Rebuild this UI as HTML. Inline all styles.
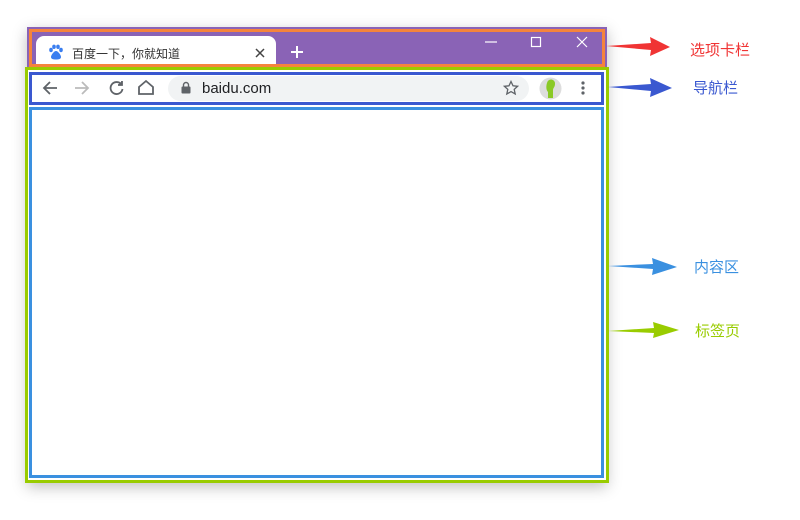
<!DOCTYPE html>
<html><head><meta charset="utf-8"><style>
*{margin:0;padding:0;box-sizing:border-box}
body{width:800px;height:520px;background:#fff;position:relative;overflow:hidden;font-family:"Liberation Sans","Noto Sans CJK SC",sans-serif}
.abs{position:absolute}
.win{left:27px;top:27px;width:580px;height:456px;background:#8a63b6;box-shadow:0 4px 14px rgba(0,0,0,.25)}
.tabbar{left:29px;top:29px;width:576px;height:38px;border:3px solid #f5843c}
.tab{left:36px;top:36px;width:240px;height:32px;background:#fff;border-radius:8px 8px 0 0}
.green{left:25px;top:67px;width:584px;height:416px;border:3px solid #99cc00;background:#fff}
.nav{left:29px;top:72px;width:575px;height:33px;border:3px solid #3a58d0;background:#fff}
.omni{left:168px;top:76px;width:361px;height:25px;background:#f1f3f4;border-radius:13px}
.content{left:29px;top:107px;width:575px;height:371px;border:3px solid #3a90e0;background:#fff}
.lbl{font-size:15px}
</style></head><body>
<div class="abs win"></div>
<div class="abs tab"></div>
<div class="abs tabbar"></div>
<svg class="abs" style="left:48px;top:44px" width="16" height="16" viewBox="0 0 16 16" fill="#3a7ef0"><ellipse cx="3" cy="6" rx="1.8" ry="2.2"/><ellipse cx="6" cy="2.8" rx="1.8" ry="2.2"/><ellipse cx="10" cy="2.8" rx="1.8" ry="2.2"/><ellipse cx="13" cy="6" rx="1.8" ry="2.2"/><path d="M8 7c-2 0-5 4-5 6s2 2.5 5 2.5 5-.5 5-2.5-3-6-5-6z"/></svg>
<div class="abs" style="left:72px;top:45px;font-size:12px;color:#333">百度一下，你就知道</div>
<svg class="abs" style="left:254px;top:47px" width="12" height="12" viewBox="0 0 12 12" stroke="#444" stroke-width="1.5"><path d="M2 2l8 8M10 2l-8 8"/></svg>
<svg class="abs" style="left:290px;top:45px" width="14" height="14" viewBox="0 0 14 14" stroke="#fff" stroke-width="2"><path d="M7 1v12M1 7h12"/></svg>
<svg class="abs" style="left:484px;top:36px" width="110" height="14" viewBox="0 0 110 14" stroke="#fff" stroke-width="1.2" fill="none"><path d="M1 6h12"/><rect x="47.5" y="1.5" width="9" height="9"/><path d="M93 1l10 10M103 1l-10 10"/></svg>
<div class="abs green"></div>
<div class="abs nav"></div>
<div class="abs omni"></div>
<svg class="abs" style="left:40px;top:78px" width="140" height="20" viewBox="0 0 140 20" fill="none" stroke-width="1.8">
<path d="M17 10H4M10 4l-6 6 6 6" stroke="#5f6368"/>
<path d="M35 10h13M42 4l6 6-6 6" stroke="#bbb"/>
<path d="M81 6a6 6 0 1 0 1.5 5" stroke="#5f6368"/><path d="M82 3v4h-4" stroke="#5f6368" fill="#5f6368"/>
<path d="M99 16V9l7-6 7 6v7z" stroke="#5f6368"/>
</svg>
<svg class="abs" style="left:180px;top:81px" width="12" height="13" viewBox="0 0 12 13" fill="#5f6368"><rect x="1.5" y="5.5" width="9" height="7" rx="1"/><path d="M3.5 6V4a2.5 2.5 0 0 1 5 0v2" fill="none" stroke="#5f6368" stroke-width="1.4"/></svg>
<div class="abs" style="left:202px;top:80px;font-size:15px;color:#202124">baidu.com</div>
<svg class="abs" style="left:503px;top:80px" width="16" height="16" viewBox="0 0 16 16" fill="none" stroke="#5f6368" stroke-width="1.3"><path d="M8 1.5l2 4.3 4.6.5-3.4 3.1 1 4.6L8 11.6 3.8 14l1-4.6L1.4 6.3 6 5.8z"/></svg>
<svg class="abs" style="left:539px;top:77px" width="23" height="23" viewBox="0 0 23 23"><circle cx="11.5" cy="11.5" r="11" fill="#ddd"/><path d="M8 6a4 4 0 0 1 8 1c0 3-2 4-2 6v8h-5v-6c-2-2-2-6-1-9z" fill="#8ac926"/></svg>
<svg class="abs" style="left:580px;top:80px" width="6" height="16" viewBox="0 0 6 16" fill="#5f6368"><circle cx="3" cy="3" r="1.6"/><circle cx="3" cy="8" r="1.6"/><circle cx="3" cy="13" r="1.6"/></svg>
<div class="abs content"></div>
<svg class="abs" style="left:600px;top:30px" width="90" height="320" viewBox="0 0 90 320">
<path d="M6 16l45-3-1-6 20 10-20 9 1-6z" fill="#f03434"/>
<path d="M8 57l43-3-1-6 22 10-22 9 1-6z" fill="#3a58d0"/>
<path d="M8 236l45-2-1-6 25 9-25 8 1-6z" fill="#3a90e0"/>
<path d="M8 301l46-3-1-6 26 8-26 8 1-5z" fill="#99cc00"/>
</svg>
<div class="abs lbl" style="left:690px;top:39px;color:#f03434">选项卡栏</div>
<div class="abs lbl" style="left:693px;top:77px;color:#3a58d0">导航栏</div>
<div class="abs lbl" style="left:694px;top:256px;color:#3a90e0">内容区</div>
<div class="abs lbl" style="left:695px;top:320px;color:#99cc00">标签页</div>
</body></html>
